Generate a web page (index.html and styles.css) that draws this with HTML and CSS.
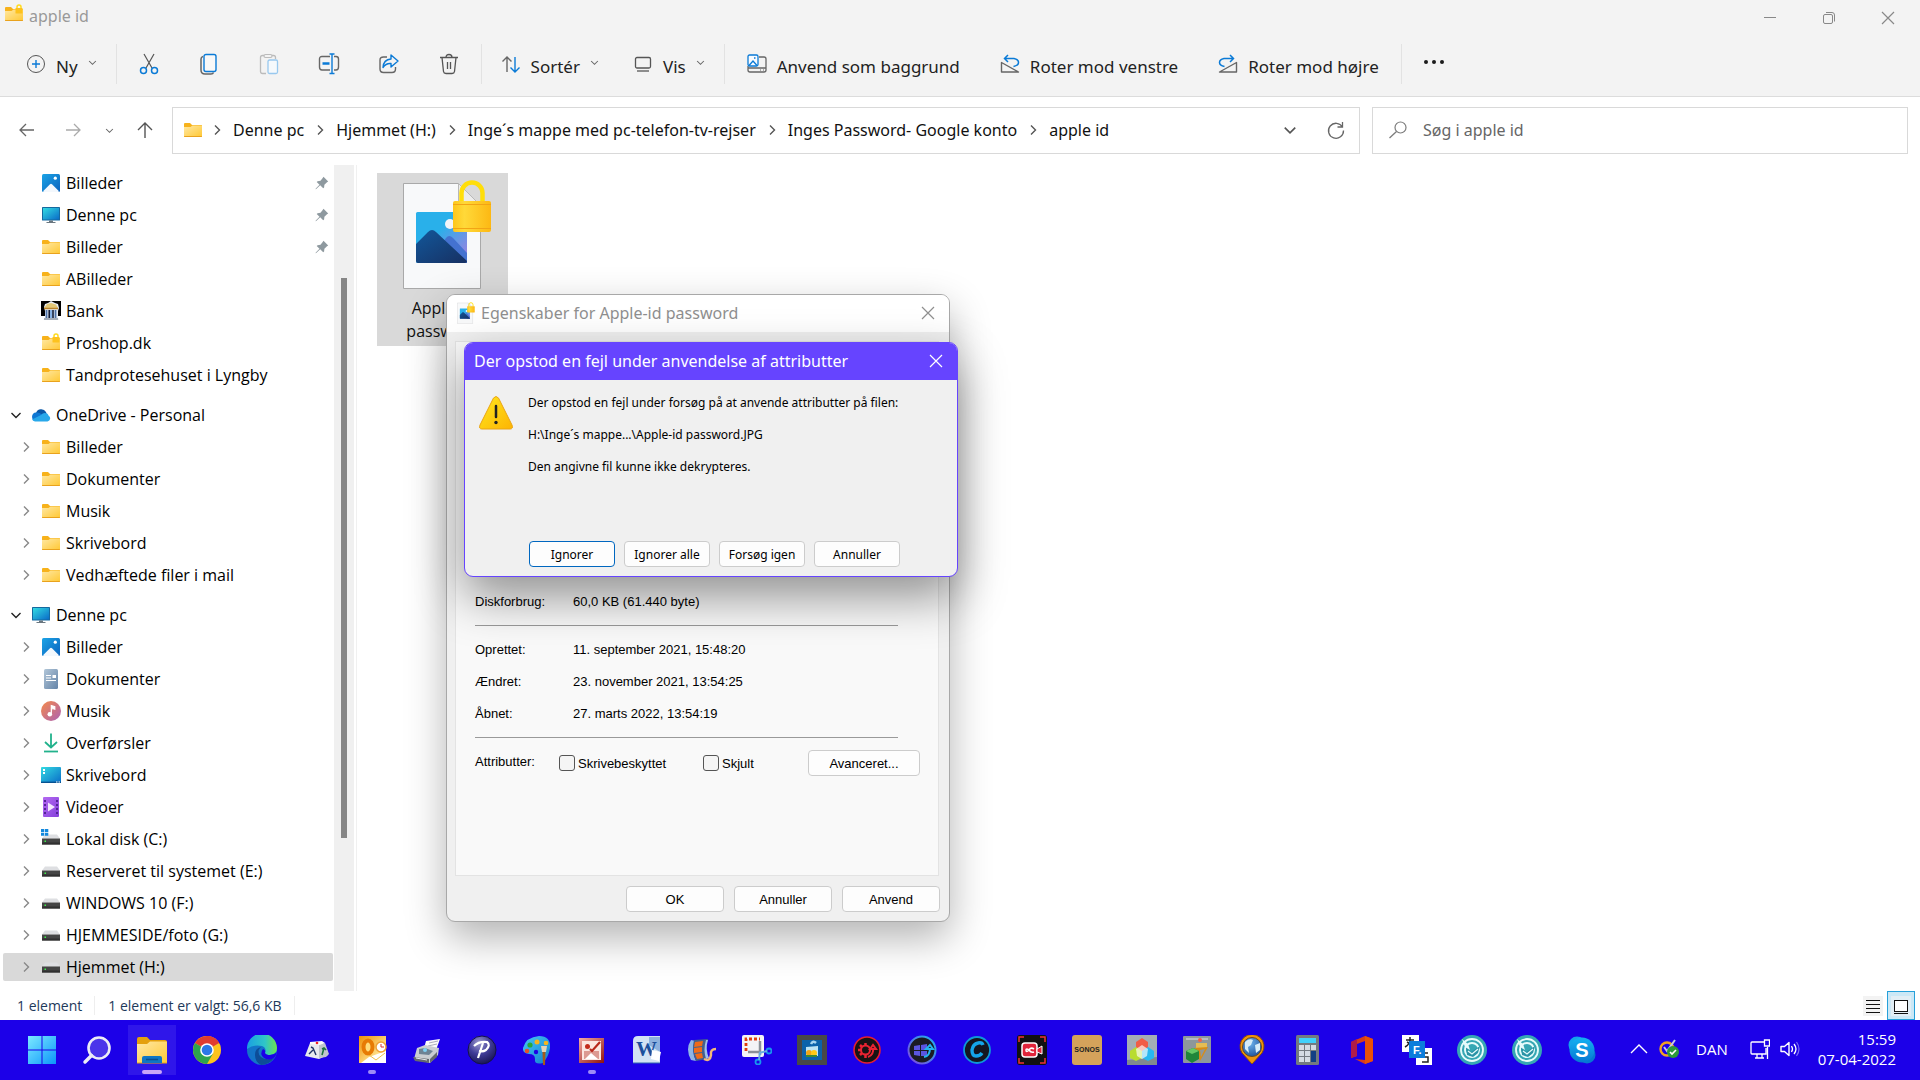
FILE: index.html
```html
<!DOCTYPE html>
<html lang="da">
<head>
    <meta charset="utf-8">
    <title>apple id</title>
    <link rel="stylesheet" href="styles.css">
</head>
<body>

<!-- Shared icons -->
<svg class="sprite" aria-hidden="true">
    <defs>
        <linearGradient id="g-folder" x1="0" y1="0" x2="1" y2="1"><stop offset="0" stop-color="#ffe8a4"/><stop offset="1" stop-color="#ffc937"/></linearGradient>
        <linearGradient id="g-screen" x1="0" y1="0" x2="1" y2="1"><stop offset="0" stop-color="#33dbe2"/><stop offset="1" stop-color="#0a6cc8"/></linearGradient>
        <linearGradient id="g-blue" x1="0" y1="0" x2="1" y2="1"><stop offset="0" stop-color="#1ca4e6"/><stop offset="1" stop-color="#0a62bd"/></linearGradient>
        <linearGradient id="g-doc" x1="0" y1="0" x2="1" y2="1"><stop offset="0" stop-color="#b2c6d8"/><stop offset="1" stop-color="#6484a8"/></linearGradient>
        <linearGradient id="g-music" x1="0" y1="0" x2="1" y2="1"><stop offset="0" stop-color="#f58a4a"/><stop offset="1" stop-color="#ac62b4"/></linearGradient>
        <linearGradient id="g-video" x1="0" y1="0" x2="1" y2="1"><stop offset="0" stop-color="#b469f2"/><stop offset="1" stop-color="#8440da"/></linearGradient>
        <linearGradient id="g-lock" x1="0" y1="0" x2="1" y2="0"><stop offset="0" stop-color="#fdc61c"/><stop offset=".3" stop-color="#ffd939"/><stop offset="1" stop-color="#fdb813"/></linearGradient>
        <linearGradient id="g-win" x1="0" y1="0" x2="1" y2="1"><stop offset="0" stop-color="#7ceaff"/><stop offset="1" stop-color="#0c95fb"/></linearGradient>
        <linearGradient id="g-sky" x1="0" y1="0" x2="1" y2="1"><stop offset=".4" stop-color="#29b0ea"/><stop offset="1" stop-color="#a87be0"/></linearGradient>
        <linearGradient id="g-mount" x1="0" y1="0" x2="1" y2="1"><stop offset="0" stop-color="#12579a"/><stop offset="1" stop-color="#173062"/></linearGradient>
        <linearGradient id="g-warn" x1="0" y1="0" x2="1" y2="1"><stop offset="0" stop-color="#ffe81e"/><stop offset="1" stop-color="#fdb403"/></linearGradient>
        <linearGradient id="g-edge" x1="0" y1="0" x2="1" y2="0"><stop offset="0" stop-color="#1a9fe2"/><stop offset=".6" stop-color="#2fc6c8"/><stop offset="1" stop-color="#6ee24e"/></linearGradient>
        <linearGradient id="g-ring" x1="0" y1="1" x2="1" y2="0"><stop offset="0" stop-color="#8344e0"/><stop offset="1" stop-color="#1bb4ee"/></linearGradient>
        <linearGradient id="g-red" x1="0" y1="0" x2="1" y2="1"><stop offset="0" stop-color="#f4aca4"/><stop offset="1" stop-color="#8e120c"/></linearGradient>
        <linearGradient id="g-gold" x1="0" y1="0" x2="1" y2="1"><stop offset="0" stop-color="#ee8e06"/><stop offset=".7" stop-color="#ffe28c"/><stop offset="1" stop-color="#fff3cf"/></linearGradient>
        <linearGradient id="g-paint" x1="0" y1="0" x2="1" y2="1"><stop offset="0" stop-color="#48c8f4"/><stop offset="1" stop-color="#107fd0"/></linearGradient>
        <linearGradient id="g-skype" x1="0" y1="0" x2="0" y2="1"><stop offset="0" stop-color="#14b2f2"/><stop offset="1" stop-color="#0677d2"/></linearGradient>
        <radialGradient id="g-ball" cx=".4" cy=".25" r=".8"><stop offset="0" stop-color="#9c9ad0"/><stop offset=".5" stop-color="#403c98"/><stop offset="1" stop-color="#16124e"/></radialGradient>
        <radialGradient id="g-globe" cx=".4" cy=".3" r=".8"><stop offset="0" stop-color="#6cb4ee"/><stop offset="1" stop-color="#1a4a94"/></radialGradient>
    </defs>
    <symbol id="i-folder" viewBox="0 0 20 20">
        <path d="M1 4q0-1 1-1h5l2 2h9.500q.5 0 .5.500V16q0 1-1 1H2q-1 0-1-1z" fill="#f7b21b"/>
        <path d="M1 7h6.500l2-1.500H19V15.500q0 .8-.8.8H1.800q-.8 0-.8-.8z" fill="url(#g-folder)"/>
        <path d="M1 16h18v.3q0 .7-1 .7H2q-1 0-1-.7z" fill="#e9a21d"/>
    </symbol>
    <symbol id="i-folderlock" viewBox="0 0 20 20">
        <use href="#i-folder"/>
        <path d="M13 4.500V3a2 2 0 0 1 4 0v1.500" fill="none" stroke="#ffdb1e" stroke-width="1.500"/>
        <rect x="11.500" y="4" width="7" height="5.500" rx=".6" fill="#fdc21d"/>
    </symbol>
    <symbol id="i-pictures" viewBox="0 0 20 20">
        <rect x="1" y="1" width="18" height="18" rx="1.500" fill="url(#g-blue)"/>
        <path d="M2 18.300l7-7q1-1 2 0l7 7q-.4.700-1 .7H3q-.6 0-1-.7z" fill="#f3f8fd"/>
        <circle cx="14.300" cy="5.200" r="1.600" fill="#fff"/>
    </symbol>
    <symbol id="i-pc" viewBox="0 0 20 20">
        <rect x="1" y="2" width="18" height="13.500" rx=".6" fill="#15699f"/>
        <rect x="2" y="3" width="16" height="11.500" fill="url(#g-screen)"/>
        <path d="M8 15.500h4V17h2.500v1h-9v-1H8z" fill="#6a7780"/>
    </symbol>
    <symbol id="i-bank" viewBox="0 0 20 20">
        <path d="M0 0h20v15H0z" fill="#000"/>
        <path d="M3 6l1-3 3-1 3-2 4 2 3 1 1 4-1 3v7l1 2H2l2-2v-7z" fill="#e8edf4"/>
        <path d="M3 7l3-4 4-1 5 1.500L17 7z" fill="#e2c777"/>
        <path d="M3 7.500h14" stroke="#b9822c" stroke-width="1.500"/>
        <path d="M5.500 9v8M14.500 9v8" stroke="#4d72a8" stroke-width="1.800"/><path d="M8.200 9v8M12 9v8" stroke="#101c38" stroke-width="1.600"/><path d="M10 9v8" stroke="#6fa3e0" stroke-width="1.600"/>
        <path d="M3 18h14" stroke="#8f99a6" stroke-width="1.500"/>
    </symbol>
    <symbol id="i-onedrive" viewBox="0 0 20 20">
        <path d="M5 8a5.500 5.500 0 0 1 10-1l1 3-9 5z" fill="#0a58a8"/>
        <path d="M4.500 16A4.300 4.300 0 0 1 5 7.500q3-.5 6 2L14 14z" fill="#0f78d4"/>
        <path d="M4 16.500q-2-.5-3-2l9-4.500q2.500-3 6-1.500 1 .5 1.500 2A3.200 3.200 0 0 1 16.500 16.500z" fill="#28a8ea"/>
    </symbol>
    <symbol id="i-doc" viewBox="0 0 20 20">
        <rect x="3" y="0" width="14" height="20" rx="1.500" fill="url(#g-doc)"/>
        <path d="M5 6.500h5M5 9h5M5 11.500h10" stroke="#fff" stroke-width="1.200"/><rect x="11.500" y="6" width="3.500" height="3" fill="#fff"/>
    </symbol>
    <symbol id="i-music" viewBox="0 0 20 20">
        <circle cx="10" cy="10" r="10" fill="url(#g-music)"/>
        <circle cx="8.800" cy="13.300" r="2.300" fill="#fff"/><path d="M10.300 13V4.500l3.500 1.200v2.500l-2.300-.8" fill="#fff" stroke="#fff" stroke-width="1.200"/>
    </symbol>
    <symbol id="i-download" viewBox="0 0 20 20">
        <path d="M10 .5V14M4 9l6 5.500L16 9" fill="none" stroke="#22b28c" stroke-width="1.800"/><path d="M3 18.500h14" stroke="#22b28c" stroke-width="1.800"/>
    </symbol>
    <symbol id="i-desktop" viewBox="0 0 20 20">
        <rect x="0" y="2" width="20" height="16" rx="1" fill="url(#g-screen)"/><path d="M0 17.300h20" stroke="#064e8e" stroke-width="1.300"/>
        <path d="M2 4h2v2H2zM2 7h2v2H2z" fill="#fff"/><path d="M15 17h1.500M17.500 17H19" stroke="#fff"/>
    </symbol>
    <symbol id="i-video" viewBox="0 0 20 20">
        <rect x="2" y="0" width="16" height="20" rx="1" fill="url(#g-video)"/><path d="M7 5.500l7 4.500-7 4.500z" fill="#f2e6fc"/>
        <path d="M4 3v14M16 3v14" stroke="#4d1f8e" stroke-width="1.800" stroke-dasharray="2 2"/>
    </symbol>
    <symbol id="i-drive" viewBox="0 0 20 20">
        <path d="M4 5.500h12l3 4H1z" fill="#dedfe2"/><rect x="1" y="9.500" width="18" height="6" fill="#454545"/><path d="M1 13.500h18v2H1z" fill="#303030"/><rect x="3.500" y="11.500" width="1.500" height="1.500" fill="#3df04a"/>
    </symbol>
    <symbol id="i-drivec" viewBox="0 0 20 20">
        <use href="#i-drive"/><path d="M0 0h3.300v3H0zM4 0h3.300v3H4zM0 3.800h3.300v3H0zM4 3.800h3.300v3H4z" fill="#1388dd"/>
    </symbol>
    <symbol id="i-pin" viewBox="0 0 14 14">
        <path d="M8.500.8L13.200 5.500l-1.200.8-2.600 2.400-.3 2.800-.9.800-3-3L1.200 13l-.7.300.3-.9L4.500 8.700l-2.800-2.600.9-.9 2.900-.4L7.700 2z" fill="#8e999f"/>
    </symbol>
    <symbol id="i-right" viewBox="0 0 12 12"><path d="M4 1.500L8.500 6 4 10.500" fill="none" stroke="currentColor" stroke-width="1.400"/></symbol>
    <symbol id="i-down" viewBox="0 0 12 12"><path d="M1.500 4L6 8.500 10.500 4" fill="none" stroke="currentColor" stroke-width="1.400"/></symbol>
    <symbol id="i-close" viewBox="0 0 14 14"><path d="M1 1l12 12M13 1L1 13" fill="none" stroke="currentColor" stroke-width="1.200"/></symbol>
    <symbol id="i-photo" viewBox="0 0 90 111">
        <path d="M1.500 4.500h55l22 22v83h-77z" fill="#f8f9fa" stroke="#a9a9a9"/>
        <path d="M56.500 4.500v22h22z" fill="#ececec" stroke="#b8b8b8"/>
        <rect x="14" y="33" width="51" height="51" rx="1.500" fill="url(#g-sky)"/>
        <circle cx="48" cy="45" r="5" fill="#f2f4f8"/>
        <path d="M40 65l4-6q3-4 7 0l14 15v10H50z" fill="#4472d0"/>
        <path d="M14 65l12-12q4-4 8 0l31 29q0 2-2 2H16q-2 0-2-2z" fill="url(#g-mount)"/>
        <path d="M59.500 23V14a10.500 10.500 0 0 1 21 0v9" fill="none" stroke="#ffde0a" stroke-width="4.500"/>
        <rect x="51" y="22" width="38" height="31" rx="2" fill="url(#g-lock)"/><path d="M51 25.500h38M51 49.500h38" stroke="#f2a415"/>
    </symbol>
    <symbol id="i-teal" viewBox="0 0 30 30">
        <circle cx="15" cy="15" r="15" fill="#36a7b4"/><circle cx="15" cy="15" r="11" fill="none" stroke="#e6fbfb" stroke-width="1.800"/>
        <circle cx="15" cy="15" r="7" fill="none" stroke="#e6fbfb" stroke-width="2"/>
        <path d="M9 12l5 5 9-6-2 7-5 4-6-2z" fill="#2a93a6"/><path d="M5 4l6 5 2 6-5-3z" fill="#e6fbfb"/>
        <path d="M11 16l4 3 6-5" fill="none" stroke="#e6fbfb" stroke-width="1.200"/>
    </symbol>
</svg>

<div class="window">
    <header class="window-top">
        <div class="titlebar">
            <svg class="icon"><use href="#i-folderlock"/></svg>
            <span class="window-name">apple id</span>
            <div class="window-buttons">
                <button type="button" aria-label="Minimer"><svg class="icon-s" viewBox="0 0 14 14"><path d="M1 6.500h12" stroke="currentColor"/></svg></button>
                <button type="button" aria-label="Gendan"><svg class="icon-s" viewBox="0 0 14 14"><rect x="1.500" y="3.500" width="9" height="9" rx="1.500" fill="none" stroke="currentColor"/><path d="M4 1.500h6q2.500 0 2.500 2.500v6.500" fill="none" stroke="currentColor"/></svg></button>
                <button type="button" aria-label="Luk"><svg class="icon-s"><use href="#i-close"/></svg></button>
            </div>
        </div>

        <div class="toolbar">
            <button type="button" class="tool tool-new">
                <svg class="icon" viewBox="0 0 20 20"><circle cx="10" cy="10" r="8.500" fill="none" stroke="#555"/><path d="M10 6v8M6 10h8" stroke="#0a7ad6" stroke-width="1.400"/></svg>
                <span>Ny</span><svg class="caret"><use href="#i-down"/></svg>
            </button>
            <span class="divider"></span>
            <button type="button" class="tool-icon" aria-label="Klip"><svg class="icon-l" viewBox="0 0 22 22"><path d="M6 1l8 14M16 1L8 15" fill="none" stroke="#555" stroke-width="1.200"/><circle cx="5.500" cy="17.500" r="3" fill="none" stroke="#0a7ad6" stroke-width="1.500"/><circle cx="16.500" cy="17.500" r="3" fill="none" stroke="#0a7ad6" stroke-width="1.500"/></svg></button>
            <button type="button" class="tool-icon" aria-label="Kopier"><svg class="icon-l" viewBox="0 0 22 22"><path d="M5 3.500q-2 .5-2 2.500v11q0 4 4 4h6q2 0 2.500-1.500" fill="none" stroke="#666" stroke-width="1.500"/><rect x="6" y="1.500" width="12" height="17" rx="2" fill="#f8f8f8" stroke="#0a7ad6" stroke-width="1.400"/></svg></button>
            <button type="button" class="tool-icon" aria-label="Sæt ind"><svg class="icon-l" viewBox="0 0 22 22"><path d="M8 20.500H4.500q-2 0-2-2v-14q0-2 2-2H6M14 2.500h1.500q2 0 2 2V6" fill="none" stroke="#bbb" stroke-width="1.300"/><rect x="6" y="1.500" width="8" height="3" rx="1.500" fill="none" stroke="#bbb" stroke-width="1.200"/><rect x="10" y="7" width="9.500" height="13.500" rx="1.500" fill="#f5f9fc" stroke="#98c8ee" stroke-width="1.300"/></svg></button>
            <button type="button" class="tool-icon" aria-label="Omdøb"><svg class="icon-l" viewBox="0 0 22 22"><path d="M12 3.500H4q-2.500 0-2.500 2.500v8q0 3 2.500 3h8M16 3.500h2q2.500 0 2.500 2.500v8q0 3-2.500 3h-2" fill="none" stroke="#666" stroke-width="1.400"/><path d="M14 1v19.500M11.500 1h5M11.500 20.500h5" stroke="#0a7ad6" stroke-width="1.400"/><path d="M4.500 10.500h7" stroke="#0a7ad6" stroke-width="2.500"/></svg></button>
            <button type="button" class="tool-icon" aria-label="Del"><svg class="icon-l" viewBox="0 0 22 22"><path d="M9 4H5.500Q2 4 2 7v9q0 3.500 3.500 3.500h8.500q3.500 0 3.500-3.500v-2" fill="none" stroke="#666" stroke-width="1.400"/><path d="M13 2l7 6-7 6v-3.500q-5-.5-8 4 .5-8 8-8.500z" fill="none" stroke="#0a7ad6" stroke-width="1.400" stroke-linejoin="round"/></svg></button>
            <button type="button" class="tool-icon" aria-label="Slet"><svg class="icon-l" viewBox="0 0 22 22"><path d="M2 4.500h18M4 4.500l1.500 14q.3 2 2.500 2h6q2.200 0 2.500-2L18 4.500M8 4.500q0-3 3-3t3 3M9.500 9v7M12.500 9v7" fill="none" stroke="#555" stroke-width="1.300"/></svg></button>
            <span class="divider"></span>
            <button type="button" class="tool">
                <svg class="icon" viewBox="0 0 20 20"><path d="M6 18V3M1.500 7.500L6 3l4.500 4.500" fill="none" stroke="#666" stroke-width="1.400"/><path d="M14 3v15M9.500 13.500L14 18l4.500-4.500" fill="none" stroke="#0a7ad6" stroke-width="1.400"/></svg>
                <span>Sortér</span><svg class="caret"><use href="#i-down"/></svg>
            </button>
            <button type="button" class="tool">
                <svg class="icon" viewBox="0 0 20 20"><rect x="2.500" y="3.500" width="15" height="10.500" rx="1.500" fill="none" stroke="#555" stroke-width="1.300"/><path d="M4 17h12" stroke="#555" stroke-width="1.300"/></svg>
                <span>Vis</span><svg class="caret"><use href="#i-down"/></svg>
            </button>
            <span class="divider"></span>
            <button type="button" class="tool wide">
                <svg class="icon" viewBox="0 0 20 20"><path d="M12 3h5q2 0 2 2v9M1 12v4q0 2 2 2h14q2 0 2-2v-2H1" fill="none" stroke="#666" stroke-width="1.300"/><path d="M13 16h1M16 16h1" stroke="#666"/><rect x="1" y="1" width="10" height="11" rx="1.500" fill="#f8fbff" stroke="#0a7ad6" stroke-width="1.300"/><path d="M2 11.500l4-4.500 4 4.500M7 4h1.500" fill="none" stroke="#0a7ad6" stroke-width="1.300"/></svg>
                <span>Anvend som baggrund</span>
            </button>
            <button type="button" class="tool wide">
                <svg class="icon" viewBox="0 0 20 20"><path d="M1.500 8.500v9.500h17z" fill="none" stroke="#666" stroke-width="1.400" stroke-linejoin="round"/><path d="M8 1L4.500 4.500 8 8M5 4.500h9q4.500 1 4.500 4t-5 4" fill="none" stroke="#0a7ad6" stroke-width="1.500"/></svg>
                <span>Roter mod venstre</span>
            </button>
            <button type="button" class="tool wide">
                <svg class="icon" viewBox="0 0 20 20"><path d="M18.500 8.500v9.500h-17z" fill="none" stroke="#666" stroke-width="1.400" stroke-linejoin="round"/><path d="M12 1l3.500 3.500L12 8M15 4.500H6q-4.500 1-4.500 4t5 4" fill="none" stroke="#0a7ad6" stroke-width="1.500"/></svg>
                <span>Roter mod højre</span>
            </button>
            <span class="divider"></span>
            <button type="button" class="tool wide" aria-label="Mere"><svg class="icon" viewBox="0 0 20 20"><circle cx="2" cy="8" r="2" fill="#1b1b1b"/><circle cx="10" cy="8" r="2" fill="#1b1b1b"/><circle cx="18" cy="8" r="2" fill="#1b1b1b"/></svg></button>
        </div>
    </header>

    <!-- Address bar and search -->
    <div class="navrow">
        <button type="button" aria-label="Tilbage"><svg class="icon" viewBox="0 0 20 20"><path d="M17 10H3M9 4l-6 6 6 6" fill="none" stroke="#666" stroke-width="1.300"/></svg></button>
        <button type="button" aria-label="Frem"><svg class="icon" viewBox="0 0 20 20"><path d="M3 10h14M11 4l6 6-6 6" fill="none" stroke="#aaa" stroke-width="1.300"/></svg></button>
        <button type="button" class="narrow" aria-label="Seneste"><svg class="caret"><use href="#i-down"/></svg></button>
        <button type="button" aria-label="Op"><svg class="icon" viewBox="0 0 20 20"><path d="M10 18V3M3 10l7-7 7 7" fill="none" stroke="#555" stroke-width="1.400"/></svg></button>
        <nav class="address">
            <svg class="icon"><use href="#i-folder"/></svg>
            <svg class="crumb-sep"><use href="#i-right"/></svg><a href="#">Denne pc</a>
            <svg class="crumb-sep"><use href="#i-right"/></svg><a href="#">Hjemmet (H:)</a>
            <svg class="crumb-sep"><use href="#i-right"/></svg><a href="#">Inge´s mappe med pc-telefon-tv-rejser</a>
            <svg class="crumb-sep"><use href="#i-right"/></svg><a href="#">Inges Password- Google konto</a>
            <svg class="crumb-sep"><use href="#i-right"/></svg><a href="#">apple id</a>
            <button type="button" class="push" aria-label="Vis adresser"><svg class="icon-s"><use href="#i-down"/></svg></button>
            <button type="button" aria-label="Opdater"><svg class="icon" viewBox="0 0 20 20"><path d="M16.500 7A7.500 7.500 0 1 0 17.500 10.500M16.500 2v5h-5" fill="none" stroke="#666" stroke-width="1.300"/></svg></button>
        </nav>
        <label class="search">
            <svg class="icon" viewBox="0 0 20 20"><circle cx="12.500" cy="7.500" r="5.500" fill="none" stroke="#7c7c7c" stroke-width="1.200"/><path d="M8.500 11.500L1.500 18" stroke="#7c7c7c" stroke-width="1.300"/></svg>
            <input type="text" placeholder="Søg i apple id" aria-label="Søg i apple id">
        </label>
    </div>

    <div class="content">
        <nav class="sidebar">
            <div class="tree">
                <a href="#" class="row quick"><svg class="icon"><use href="#i-pictures"/></svg>Billeder<svg class="pin"><use href="#i-pin"/></svg></a>
                <a href="#" class="row quick"><svg class="icon"><use href="#i-pc"/></svg>Denne pc<svg class="pin"><use href="#i-pin"/></svg></a>
                <a href="#" class="row quick"><svg class="icon"><use href="#i-folder"/></svg>Billeder<svg class="pin"><use href="#i-pin"/></svg></a>
                <a href="#" class="row quick"><svg class="icon"><use href="#i-folder"/></svg>ABilleder</a>
                <a href="#" class="row quick"><svg class="icon"><use href="#i-bank"/></svg>Bank</a>
                <a href="#" class="row quick"><svg class="icon"><use href="#i-folderlock"/></svg>Proshop.dk</a>
                <a href="#" class="row quick"><svg class="icon"><use href="#i-folder"/></svg>Tandprotesehuset i Lyngby</a>

                <a href="#" class="row root"><svg class="arrow"><use href="#i-down"/></svg><svg class="icon"><use href="#i-onedrive"/></svg>OneDrive - Personal</a>
                <a href="#" class="row"><svg class="arrow"><use href="#i-right"/></svg><svg class="icon"><use href="#i-folder"/></svg>Billeder</a>
                <a href="#" class="row"><svg class="arrow"><use href="#i-right"/></svg><svg class="icon"><use href="#i-folder"/></svg>Dokumenter</a>
                <a href="#" class="row"><svg class="arrow"><use href="#i-right"/></svg><svg class="icon"><use href="#i-folder"/></svg>Musik</a>
                <a href="#" class="row"><svg class="arrow"><use href="#i-right"/></svg><svg class="icon"><use href="#i-folder"/></svg>Skrivebord</a>
                <a href="#" class="row"><svg class="arrow"><use href="#i-right"/></svg><svg class="icon"><use href="#i-folder"/></svg>Vedhæftede filer i mail</a>

                <a href="#" class="row root"><svg class="arrow"><use href="#i-down"/></svg><svg class="icon"><use href="#i-pc"/></svg>Denne pc</a>
                <a href="#" class="row"><svg class="arrow"><use href="#i-right"/></svg><svg class="icon"><use href="#i-pictures"/></svg>Billeder</a>
                <a href="#" class="row"><svg class="arrow"><use href="#i-right"/></svg><svg class="icon"><use href="#i-doc"/></svg>Dokumenter</a>
                <a href="#" class="row"><svg class="arrow"><use href="#i-right"/></svg><svg class="icon"><use href="#i-music"/></svg>Musik</a>
                <a href="#" class="row"><svg class="arrow"><use href="#i-right"/></svg><svg class="icon"><use href="#i-download"/></svg>Overførsler</a>
                <a href="#" class="row"><svg class="arrow"><use href="#i-right"/></svg><svg class="icon"><use href="#i-desktop"/></svg>Skrivebord</a>
                <a href="#" class="row"><svg class="arrow"><use href="#i-right"/></svg><svg class="icon"><use href="#i-video"/></svg>Videoer</a>
                <a href="#" class="row"><svg class="arrow"><use href="#i-right"/></svg><svg class="icon"><use href="#i-drivec"/></svg>Lokal disk (C:)</a>
                <a href="#" class="row"><svg class="arrow"><use href="#i-right"/></svg><svg class="icon"><use href="#i-drive"/></svg>Reserveret til systemet (E:)</a>
                <a href="#" class="row"><svg class="arrow"><use href="#i-right"/></svg><svg class="icon"><use href="#i-drive"/></svg>WINDOWS 10 (F:)</a>
                <a href="#" class="row"><svg class="arrow"><use href="#i-right"/></svg><svg class="icon"><use href="#i-drive"/></svg>HJEMMESIDE/foto (G:)</a>
                <a href="#" class="row selected"><svg class="arrow"><use href="#i-right"/></svg><svg class="icon"><use href="#i-drive"/></svg>Hjemmet (H:)</a>
            </div>
            <div class="scrollbar"><div class="thumb"></div></div>
        </nav>
        <main class="files">
            <a href="#" class="file">
                <svg class="file-icon"><use href="#i-photo"/></svg>
                <span>Apple-id password</span>
            </a>
        </main>
    </div>

    <footer class="status">
        <span>1 element</span>
        <span>1 element er valgt: 56,6 KB</span>
        <div class="views">
            <button type="button" aria-label="Detaljer"><svg class="icon" viewBox="0 0 20 20"><rect width="20" height="20" fill="#f3f3f3"/><path d="M3 4.500h14M3 8.500h14M3 12.500h14M3 16.500h14" stroke="#111"/></svg></button>
            <button type="button" class="active" aria-label="Store ikoner"><svg class="icon" viewBox="0 0 20 20"><rect width="20" height="20" fill="#e2eef5"/><rect x="3.500" y="4.500" width="13" height="11" fill="#fff" stroke="#111"/><path d="M3 17.500h14" stroke="#111"/></svg></button>
        </div>
    </footer>
</div>

<!-- Properties dialog -->
<section class="dialog props" role="dialog" aria-label="Egenskaber">
    <div class="dialog-title">
        <svg class="title-photo"><use href="#i-photo"/></svg>
        <span>Egenskaber for Apple-id password</span>
        <button type="button" aria-label="Luk"><svg class="icon-s"><use href="#i-close"/></svg></button>
    </div>
    <form class="sheet">
        <dl class="facts">
            <dt>Diskforbrug:</dt><dd>60,0 KB (61.440 byte)</dd>
        </dl>
        <hr>
        <dl class="facts">
            <dt>Oprettet:</dt><dd>11. september 2021, 15:48:20</dd>
            <dt>Ændret:</dt><dd>23. november 2021, 13:54:25</dd>
            <dt>Åbnet:</dt><dd>27. marts 2022, 13:54:19</dd>
        </dl>
        <hr>
        <div class="attributes">
            <span>Attributter:</span>
            <label class="first"><input type="checkbox">Skrivebeskyttet</label>
            <label><input type="checkbox">Skjult</label>
            <button type="button" class="btn">Avanceret...</button>
        </div>
    </form>
    <div class="dialog-buttons">
        <button type="button" class="btn">OK</button>
        <button type="button" class="btn">Annuller</button>
        <button type="button" class="btn">Anvend</button>
    </div>
</section>

<!-- Error message -->
<section class="dialog error" role="alertdialog" aria-label="Fejl">
    <div class="dialog-title">
        <span>Der opstod en fejl under anvendelse af attributter</span>
        <button type="button" aria-label="Luk"><svg class="icon-s"><use href="#i-close"/></svg></button>
    </div>
    <div class="message">
        <svg class="warning" viewBox="0 0 34 34"><path d="M14.500 2q2.500-3 5 0L33 29q1.500 4-2 4H3q-3.500 0-2-4z" fill="url(#g-warn)" stroke="#eaa414"/><path d="M17 10v11" stroke="#222" stroke-width="2.500" stroke-linecap="round"/><circle cx="17" cy="26.500" r="1.700" fill="#222"/></svg>
        <div>
            <p>Der opstod en fejl under forsøg på at anvende attributter på filen:</p>
            <p>H:\Inge´s mappe...\Apple-id password.JPG</p>
            <p>Den angivne fil kunne ikke dekrypteres.</p>
        </div>
    </div>
    <div class="dialog-buttons">
        <button type="button" class="btn default">Ignorer</button>
        <button type="button" class="btn">Ignorer alle</button>
        <button type="button" class="btn">Forsøg igen</button>
        <button type="button" class="btn">Annuller</button>
    </div>
</section>

<footer class="taskbar">
    <div class="apps">
        <button type="button" aria-label="Start"><svg viewBox="0 0 30 30"><path d="M1 1h13.500v13.500H1zM15.500 1H29v13.500H15.500zM1 15.500h13.500V29H1zM15.500 15.500H29V29H15.500z" fill="url(#g-win)"/></svg></button>
        <button type="button" aria-label="Søg"><svg viewBox="0 0 30 30"><circle cx="17" cy="13" r="10.500" fill="#4b35ea" stroke="#ececf6" stroke-width="2.600"/><path d="M9.500 20.500L3 27" stroke="#ececf6" stroke-width="3.500" stroke-linecap="round"/></svg></button>
        <button type="button" class="open current" aria-label="Stifinder"><svg viewBox="0 0 30 30"><path d="M0 4q0-2 2-2h8l3 3h15q2 0 2 2v5H0z" fill="#e4a00e"/><path d="M0 9h10l3-2.500h17V28H0z" fill="url(#g-folder)"/><path d="M0 28h30" stroke="#e5a418"/><path d="M5 28v-5q0-2 2-2h16q2 0 2 2v5z" fill="#0f76c4"/><path d="M9 24.500h12" stroke="#0a4f8e" stroke-width="1.500"/></svg></button>
        <button type="button" aria-label="Chrome"><svg viewBox="0 0 30 30"><circle cx="15" cy="15" r="14" fill="#fcc31e"/><path d="M15 15L2.900 8A14 14 0 0 1 27.100 8z" fill="#e03c31"/><path d="M15 1a14 14 0 0 1 12.100 7H15z" fill="#e03c31"/><path d="M2.900 8A14 14 0 0 0 15 29l6-10.500L15 15z" fill="#2da44e"/><circle cx="15" cy="15" r="6.800" fill="#fff"/><circle cx="15" cy="15" r="5.300" fill="#2b78e8"/></svg></button>
        <button type="button" aria-label="Edge"><svg viewBox="0 0 30 30"><circle cx="15" cy="15" r="15" fill="#1374c8"/><path d="M0 14A15 15 0 0 1 30 13q0 6-7 7-4 0-5-2 2-5-3-7-8-2-15 3z" fill="url(#g-edge)"/><path d="M8 20q0-7 6-8-5 5 0 10 5 4 13 1Q22 30 14 30 8 27 8 20z" fill="#0d4d98"/><path d="M16 14q3 1 2 4 1 2 5 2 4 0 7-3-1 4-3 6-5 3-10 0-5-4-1-9z" fill="#1c00e8"/></svg></button>
        <button type="button" aria-label="Terninger"><svg viewBox="0 0 30 30"><path d="M8 8h13l2 2 3 10-9 4-14-3z" fill="#e8eaee"/><path d="M17 10l6-2 4 11-3 3-7 1z" fill="#bfc4cc"/><path d="M8 7l12-1 3 2-6 2-9-1z" fill="#fafafa"/><circle cx="15" cy="8" r="1.300" fill="#e22"/><path d="M9 12l2 1 3 7M11 15l-4 4" stroke="#203468" stroke-width="1.400" fill="none"/><path d="M20 20l2-7M20 14l2-1 2 2" stroke="#1c7240" stroke-width="1.600" fill="none"/></svg></button>
        <button type="button" class="open" aria-label="Outlook"><svg viewBox="0 0 30 30"><path d="M2 1h27v27H2z" fill="url(#g-gold)"/><path d="M12 22l17-6v12H4z" fill="#fff"/><path d="M12 20l7 5 9-7" fill="none" stroke="#f1c04a"/><ellipse cx="11" cy="12" rx="4.500" ry="6.500" fill="#ffdc7a" stroke="#e77b04" stroke-width="4"/><circle cx="24" cy="12" r="5" fill="#fff" stroke="#eda136" stroke-width="1.500"/><path d="M24 9v3h3" fill="none" stroke="#d33"/></svg></button>
        <button type="button" aria-label="Printer"><svg viewBox="0 0 30 30"><path d="M14 6l14-2-4 11-13 2z" fill="#fafafa"/><path d="M17 8l9-2M16 11l9-2" stroke="#aab"/><path d="M5 13l8-3 14 3-1 7-8 8-16-4z" fill="#c9cdd2"/><path d="M7 14l6-1 8 3-4 4-10-1z" fill="#6d8294"/><circle cx="13" cy="15" r="2" fill="#7fd0f4"/><path d="M1 22l16 2v4L3 26zM18 24l7-7v5l-7 6z" fill="#65696f"/><path d="M4 23l11 2" stroke="#e8eaec"/></svg></button>
        <button type="button" aria-label="P"><svg viewBox="0 0 30 30"><circle cx="15" cy="15" r="14" fill="url(#g-ball)" stroke="#14114c"/><path d="M7 11q5-5 13-4 4 3-1 8-3 2-7 1M16 8l-5 15" fill="none" stroke="#fff" stroke-width="2.200"/></svg></button>
        <button type="button" aria-label="Paint"><svg viewBox="0 0 30 30"><path d="M17 1q12 0 11 12-1 8-7 15-9 2-8-4 0-5-6-5-7-1-6-6Q4 2 17 1z" fill="url(#g-paint)"/><circle cx="15" cy="7" r="2.500" fill="#f6b51e"/><circle cx="8" cy="10" r="2.600" fill="#28a83c"/><circle cx="5" cy="16" r="2.300" fill="#e4502c"/><circle cx="24" cy="8" r="2.300" fill="#f6b51e"/><circle cx="14" cy="17" r="2.200" fill="#1c00e8"/><path d="M19 11h6l-1 6h-4z" fill="#e5d5b8"/><path d="M20.500 17h3l-.5 13h-2z" fill="#a55a1a"/></svg></button>
        <button type="button" class="open" aria-label="Picture Manager"><svg viewBox="0 0 30 30"><rect x="2" y="3" width="25" height="25" fill="url(#g-red)"/><rect x="5" y="6" width="19" height="19" fill="#fbe6e1"/><path d="M7 16h15v8H7z" fill="#dc9a92"/><path d="M8 24l6-6 7 6z" fill="#fff"/><path d="M13 14l2 2 8-9" stroke="#b8281c" stroke-width="2.200" fill="none"/><circle cx="10.500" cy="11.500" r="2.500" fill="#c22c1e"/></svg></button>
        <button type="button" aria-label="Word"><svg viewBox="0 0 30 30"><path d="M1 6q0-5 5-5h22v27H1z" fill="#d2e2f4"/><path d="M17 2h11v15L17 10z" fill="#8db0de"/><text x="4" y="21" class="word">W</text><path d="M20 15l9 2-2 9-8-2z" fill="#fff"/><path d="M1 28h27" stroke="#2f66ae"/></svg></button>
        <button type="button" aria-label="Movie Maker"><svg viewBox="0 0 30 30"><path d="M4 5q-6 9 0 20l5 1q-5-10 0-20z" fill="#8fb5e6"/><path d="M7 5l14-1q-4 9-1 20l-11 2q-5-10-2-21z" fill="#42608e"/><path d="M8 7l8-1-1 5-8 1zM7 13l8-1v5l-8 1zM8 19l7-1 1 5-6 1z" fill="#f06a18"/><path d="M19 5q-3 10 0 19l3-1q-4-9-1-18z" fill="#9fc0ec"/><path d="M17 24q6 3 7-4-1-6 5-6" fill="none" stroke="#f2b878" stroke-width="2.500"/></svg></button>
        <button type="button" aria-label="Klippeværktøj"><svg viewBox="0 0 30 30"><rect width="22" height="22" rx="2" fill="#f4f4f6"/><path d="M4 16V4h14" fill="none" stroke="#df3c10" stroke-width="2.800" stroke-dasharray="3 2"/><path d="M6 17h12M18 6v14" stroke="#8b9198" stroke-width="2.500"/><circle cx="27" cy="16" r="2.500" fill="none" stroke="#1696ee" stroke-width="1.800"/><circle cx="16" cy="27" r="2.500" fill="none" stroke="#1696ee" stroke-width="1.800"/><path d="M17 18l8-2M18 17l-1 8" stroke="#67aee0" stroke-width="2"/></svg></button>
        <button type="button" aria-label="Fotos"><svg viewBox="0 0 30 30"><path d="M0 0h30v30H0z" fill="#484848"/><path d="M5 5h20v20H5z" fill="#0b62aa"/><path d="M9 12l12-1v10H9z" fill="#bde4f4"/><circle cx="12" cy="18" r="3" fill="#f0a514"/><circle cx="17" cy="18" r="3" fill="#ffc914"/><path d="M9 20h11v2H9z" fill="#3e8a30"/><path d="M14 9q2-4 5-1" stroke="#a5d4ef" stroke-width="2.500" fill="none"/></svg></button>
        <button type="button" aria-label="Game Booster"><svg viewBox="0 0 30 30"><circle cx="15" cy="15" r="13" fill="#171313" stroke="#e61f31" stroke-width="1.600"/><circle cx="13.500" cy="15" r="4.500" fill="none" stroke="#ea2432" stroke-width="2"/><path d="M13.500 8v3M13.500 19v4M6 15h3M8 10l2 2M8 20l2-2" stroke="#ea2432" stroke-width="2.500"/><path d="M16 22q6-2 5-9M18 14l3-4 3 4z" stroke="#ea2432" stroke-width="2" fill="none"/></svg></button>
        <button type="button" aria-label="Software Updater"><svg viewBox="0 0 30 30"><circle cx="15" cy="15" r="13.500" fill="#1a1b24" stroke="url(#g-ring)" stroke-width="2"/><path d="M7 11l6-1v5H7zM14 10l6-1v6h-6zM7 16h6v5l-6-1zM14 16h6v5l-6 0z" fill="#5a55e0"/><path d="M17 22q6-1 6-9M19 14l4-4 3 4z" fill="none" stroke="#22b5ee" stroke-width="2"/></svg></button>
        <button type="button" aria-label="CCleaner"><svg viewBox="0 0 30 30"><circle cx="15" cy="15" r="13" fill="#141620" stroke="#0e98d8" stroke-width="1.800"/><path d="M21 10q-1-3-5-2-5 1-6 7 0 6 4 6 4 0 6-3" fill="none" stroke="#14a5ea" stroke-width="3.400"/></svg></button>
        <button type="button" aria-label="Skærmoptager"><svg viewBox="0 0 30 30"><rect width="30" height="30" rx="3" fill="#111"/><path d="M2 7V2h5M23 2h5v5M28 23v5h-5M7 28H2v-5" fill="none" stroke="#e33" stroke-width="1.500"/><rect x="5" y="8" width="15" height="14" rx="3" fill="#e0243a" stroke="#fff" stroke-width="1.500"/><path d="M20 14l5-3v8l-5-2z" fill="#e0243a" stroke="#fff"/><path d="M17 17q-3 1-5-2-3-2-3 0 0 3 3 0 2-3 5-1" fill="none" stroke="#fff" stroke-width="1.600"/></svg></button>
        <button type="button" aria-label="Sonos"><svg viewBox="0 0 30 30"><rect width="30" height="30" rx="3" fill="#d5a25b"/><text x="15" y="17" class="sonos">SONOS</text></svg></button>
        <button type="button" aria-label="Farver"><svg viewBox="0 0 30 30"><path d="M0 0h30v30H0z" fill="#a4adb5"/><path d="M0 25l30-3v8H0z" fill="#80898f"/><path d="M15 3l6 4v7l-6 4-6-4V7z" fill="#f15c46"/><path d="M9 12l6 4v7l-6 3-6-3v-7z" fill="#b8dc30"/><path d="M21 12l6 4v7l-6 3-6-3v-7z" fill="#28b8f0"/><path d="M15 10l6 4-1 7-5 3-5-3-1-7z" fill="#fff" opacity=".65"/></svg></button>
        <button type="button" aria-label="Kasser"><svg viewBox="0 0 30 30"><rect x="1" y="1" width="28" height="27" rx="1" fill="#8e979c"/><path d="M4 4h22" stroke="#dde"/><circle cx="18" cy="5" r="2" fill="#f1604c"/><path d="M14 8h11v6H14z" fill="#e5bd54"/><path d="M12 13l14-1-8 14z" fill="#d68c18"/><path d="M18 15l5-1-4 8z" fill="#8e979c"/><path d="M4 16l7-3 6 3v8l-7 4-6-4z" fill="#21863a"/><path d="M4 16l7-3 6 3-7 3z" fill="#66c865"/></svg></button>
        <button type="button" aria-label="Kort"><svg viewBox="0 0 30 30"><path d="M15 29L5 18A12 12 0 1 1 25 18z" fill="#ef940d" stroke="#85500c"/><circle cx="15" cy="12" r="9.500" fill="url(#g-globe)" stroke="#6b4a20"/><path d="M8 7q4-4 8-2l-2 5-3 2 1 6-4-4zM18 10l5-2v7l-4 3z" fill="#d6edf9"/></svg></button>
        <button type="button" aria-label="Lommeregner"><svg viewBox="0 0 30 30"><rect x="4" width="23" height="30" rx="1.500" fill="#737a80"/><path d="M7 3h17v5H7z" fill="#3fd0fa"/><path d="M7 10h5v5H7zM13 10h5v5h-5zM19 10h5v5h-5zM7 16h5v5H7zM13 16h5v5h-5zM7 22h5v5H7zM13 22h5v5h-5z" fill="#d4dbe2"/><path d="M19 16h5v11h-5z" fill="#123f84"/></svg></button>
        <button type="button" aria-label="Office"><svg viewBox="0 0 30 30"><path d="M4 7L18 1l8 3v22l-8 3-10-5 10 1V6l-8 3v12l-6 2z" fill="#d83b1c"/><path d="M18 1l8 3v22l-8 3z" fill="#e85008"/><path d="M4 7l6-3v17l-6 2z" fill="#b01c48"/></svg></button>
        <button type="button" aria-label="Oversætter"><svg viewBox="0 0 30 30"><path d="M0 0h17v17H0zM14 13h16v17H14z" fill="#fff"/><path d="M4 5h8M8 2v3q0 4-5 7M5 7l7 4M19 18h7M19 22h7v5h-6" fill="none" stroke="#222" stroke-width="1.500"/><path d="M7 6h16v17H7z" fill="#0b7ddb"/><text x="11" y="19" class="letter">F.</text></svg></button>
        <button type="button" aria-label="Internet"><svg><use href="#i-teal"/></svg></button>
        <button type="button" aria-label="Internet 2"><svg><use href="#i-teal"/></svg></button>
        <button type="button" aria-label="Skype"><svg viewBox="0 0 30 30"><circle cx="10" cy="10" r="8.500" fill="#12a4ea"/><circle cx="20" cy="20" r="8.500" fill="#0677d2"/><circle cx="15" cy="15" r="12.500" fill="url(#g-skype)"/><text x="15" y="22" class="skype">S</text></svg></button>
    </div>
    <div class="tray">
        <button type="button" aria-label="Skjulte ikoner"><svg class="icon" viewBox="0 0 20 20"><path d="M2 14l8-8 8 8" fill="none" stroke="#fff" stroke-width="1.400"/></svg></button>
        <svg class="icon" viewBox="0 0 20 20"><circle cx="8" cy="10" r="6.500" fill="none" stroke="#f0a024" stroke-width="2.400"/><path d="M5 8l3 4 8-11" fill="none" stroke="#c4c8e4" stroke-width="2"/><circle cx="14" cy="13" r="6" fill="#2b9a3a"/><path d="M11 13l2 2 4-4" fill="none" stroke="#fff" stroke-width="1.600"/></svg>
        <span class="lang">DAN</span>
        <svg class="icon" viewBox="0 0 20 20"><path d="M14 3H2q-1 0-1 1v10q0 1 1 1h14V9M5 19h9M7 15v4M12 15v4M17.500 8v12M14.500 1h5v6h-5z" fill="none" stroke="#fff" stroke-width="1.300"/></svg>
        <svg class="icon" viewBox="0 0 20 20"><path d="M1 7.500h3.500L9 3.500v13l-4.500-4H1z" fill="none" stroke="#fff" stroke-width="1.400" stroke-linejoin="round"/><path d="M11.500 7q2 3 0 6M14 5q4 5 0 10" fill="none" stroke="#fff" stroke-width="1.300"/><path d="M16.500 3q5 7 0 14" fill="none" stroke="#7a6cf4" stroke-width="1.200"/></svg>
        <div class="clock">15:59<br>07-04-2022</div>
    </div>
</footer>

</body>
</html>
```
FILE: styles.css
```css
* {
    box-sizing: border-box;
}

body {
    margin: 0;
    height: 100vh;
    display: flex;
    flex-direction: column;
    overflow: hidden;
    background-color: #fff;
    color: #111;
    font-family: "Open Sans", "Noto Sans", sans-serif;
    font-size: 16px;
}

button {
    display: flex;
    align-items: center;
    justify-content: center;
    border: none;
    padding: 0;
    background: none;
    color: inherit;
    font: inherit;
}

a {
    color: inherit;
    text-decoration: none;
}

svg {
    flex: none;
}

.sprite {
    position: absolute;
    width: 0;
    height: 0;
}

.icon {
    width: 20px;
    height: 20px;
}

.icon-l {
    width: 22px;
    height: 22px;
}

.icon-s {
    width: 14px;
    height: 14px;
}

.caret {
    width: 9px;
    height: 9px;
    color: #666;
}

.window {
    flex: 1;
    min-height: 0;
    display: flex;
    flex-direction: column;
}

/* Title bar and toolbar */
.window-top {
    background-color: #f3f3f3;
    border-bottom: 1px solid #dcdcdc;
    font-family: "Noto Sans", sans-serif;
}

.titlebar {
    display: flex;
    align-items: center;
    gap: 5px;
    height: 32px;
    padding: 0 3px 0 4px;
    color: #999;
}

.titlebar > .icon {
    margin-bottom: 4px;
}

.window-buttons {
    display: flex;
    margin-left: auto;
    height: 32px;
}

.window-buttons button {
    width: 59px;
    padding-top: 4px;
    color: #888;
}

.toolbar {
    display: flex;
    align-items: center;
    height: 64px;
    color: #222;
    font-size: 17px;
}

.divider {
    width: 1px;
    height: 40px;
    margin: 0 2px;
    background-color: #e2e2e2;
}

.tool {
    gap: 10px;
    height: 40px;
    padding: 0 17px;
}

.tool span {
    padding-top: 4px;
}

.tool-new {
    padding: 0 17px 0 26px;
}

.wide {
    padding: 0 20px;
}

.tool .caret {
    margin-bottom: 4px;
}

.tool-icon {
    width: 60px;
    height: 40px;
}

/* Address bar */
.navrow {
    display: flex;
    align-items: center;
    height: 68px;
    padding: 0 12px 2px 4px;
}

.navrow button {
    width: 46px;
    height: 40px;
}

.navrow .narrow {
    width: 26px;
}

.address {
    flex: 1;
    display: flex;
    align-items: center;
    height: 47px;
    margin: 0 12px 0 4px;
    padding: 0 0 0 10px;
    border: 1px solid #d9d9d9;
    font-family: "Noto Sans", sans-serif;
    white-space: nowrap;
}

.crumb-sep {
    width: 12px;
    height: 12px;
    margin: 0 10px;
    color: #555;
}

.address > .icon {
    margin-right: -2px;
}

.address button {
    color: #555;
}

.address .push {
    margin-left: auto;
}

.search {
    flex: 0 1 536px;
    height: 47px;
    display: flex;
    align-items: center;
    gap: 15px;
    padding: 0 15px;
    border: 1px solid #d9d9d9;
}

.search input {
    flex: 1;
    border: none;
    outline: none;
    padding: 0;
    font-family: "Noto Sans", sans-serif;
    font-size: 16px;
}

.search input::placeholder {
    color: #666;
}

/* Folder tree */
.content {
    flex: 1;
    min-height: 0;
    display: flex;
}

.sidebar {
    display: flex;
    width: 357px;
    padding-right: 2px;
    border-right: 1px solid #f0f0f0;
}

.tree {
    flex: 1;
    padding: 4px 1px 0 3px;
    overflow: hidden;
}

.row {
    display: flex;
    align-items: center;
    gap: 5px;
    height: 28px;
    margin-bottom: 4px;
    padding-left: 13px;
    border-radius: 2px;
    color: #000;
}

.quick {
    padding-left: 38px;
}

.root {
    margin-top: 12px;
    padding-left: 3px;
}

.selected {
    background-color: #d9d9d9;
}

.arrow {
    width: 20px;
    height: 12px;
    color: #888;
}

.root .arrow {
    color: #222;
}

.pin {
    width: 14px;
    height: 14px;
    margin-left: auto;
    margin-right: 4px;
}

.scrollbar {
    width: 20px;
    padding: 113px 7px 153px;
    background-color: #f0f0f0;
}

.thumb {
    height: 100%;
    background-color: #868686;
}

/* File list */
.files {
    flex: 1;
    padding: 8px 20px;
}

.file {
    display: flex;
    flex-direction: column;
    align-items: center;
    gap: 7px;
    width: 131px;
    height: 173px;
    padding: 6px 20px 0;
    background-color: #d9d9d9;
    line-height: 23px;
    text-align: center;
}

.file-icon {
    width: 90px;
    height: 111px;
    margin-left: 9px;
}

/* Status bar */
.status {
    display: flex;
    align-items: center;
    height: 29px;
    padding: 0 5px 0 17px;
    color: #1e395b;
    font-size: 14px;
}

.status span {
    padding-right: 12px;
    margin-right: 13px;
    border-right: 1px solid #eee;
}

.views {
    display: flex;
    margin-left: auto;
}

.views button {
    width: 28px;
    height: 29px;
}

.views .active {
    background-color: #cce8f6;
    border: 1px solid #26a0da;
}

/* Dialogs */
.dialog {
    position: absolute;
    display: flex;
    flex-direction: column;
    border-radius: 9px;
    background-color: #f0f0f0;
    overflow: hidden;
}

.dialog-title {
    display: flex;
    align-items: center;
    height: 37px;
    padding-bottom: 2px;
    font-family: "Noto Sans", sans-serif;
    font-size: 16px;
}

.dialog-title button {
    width: 42px;
    height: 34px;
    margin-left: auto;
}

.btn {
    height: 26px;
    border: 1px solid #ccc;
    border-radius: 4px;
    background-color: #fdfdfd;
    color: #000;
}

.props {
    left: 446px;
    top: 294px;
    width: 504px;
    height: 628px;
    border: 1px solid #a8a8a8;
    box-shadow: 0 16px 40px rgba(0, 0, 0, 0.3);
    font-family: "Liberation Sans", Arial, sans-serif;
    font-size: 13px;
}

.props .dialog-title {
    padding-left: 10px;
    gap: 6px;
    background-color: #fff;
    color: #8f8f8f;
}

.title-photo {
    width: 18px;
    height: 22px;
}

.sheet {
    flex: 1;
    display: flex;
    flex-direction: column;
    margin: 9px 10px 0 8px;
    padding: 244px 18px 0 19px;
    border: 1px solid #e3e3e3;
    background-color: #f9f9f9;
    color: #000;
}

.facts {
    display: grid;
    grid-template-columns: 98px 1fr;
    margin: 0;
    line-height: 32px;
}

.facts dd {
    margin: 0;
}

.sheet hr {
    width: 423px;
    margin: 7px 0 8px;
    border: none;
    border-top: 1px solid #9a9a9a;
}

.attributes {
    display: flex;
    align-items: center;
    padding-top: 4px;
}

.attributes span {
    width: 84px;
    padding-bottom: 3px;
}

.attributes label {
    display: flex;
    align-items: center;
    gap: 3px;
}

.attributes .first {
    width: 144px;
}

.attributes input {
    appearance: none;
    width: 16px;
    height: 16px;
    margin: 0;
    border: 1px solid #555;
    border-radius: 3px;
    background-color: #f5f5f5;
}

.attributes .btn {
    width: 112px;
    margin-left: auto;
}

.dialog-buttons {
    display: flex;
    gap: 10px;
}

.props .dialog-buttons {
    justify-content: flex-end;
    padding: 10px 9px 9px;
}

.props .dialog-buttons .btn {
    width: 98px;
}

.error {
    left: 464px;
    top: 342px;
    width: 494px;
    height: 235px;
    border: 1px solid #6644ff;
    box-shadow: 0 20px 48px rgba(0, 0, 0, 0.42);
    font-family: "Noto Sans", sans-serif;
    font-size: 12px;
    color: #000;
}

.error .dialog-title {
    padding-left: 9px;
    background-color: #6644ff;
    color: #fff;
}

.message {
    flex: 1;
    display: flex;
    gap: 15px;
    padding: 7px 14px;
    line-height: 32px;
}

.message p {
    margin: 0;
}

.warning {
    width: 34px;
    height: 34px;
    margin-top: 9px;
}

.error .dialog-buttons {
    gap: 9px;
    padding: 0 0 9px 64px;
}

.error .btn {
    width: 86px;
}

.error .default {
    border-color: #0067c0;
}

/* Taskbar */
.taskbar {
    display: flex;
    height: 60px;
    padding: 0 24px 0 14px;
    background-color: #1c00e8;
    color: #fff;
}

.apps {
    display: flex;
}

.apps button {
    position: relative;
    width: 55px;
    height: 60px;
}

.apps svg {
    width: 30px;
    height: 30px;
}

.apps .open::after {
    content: "";
    position: absolute;
    bottom: 6px;
    width: 8px;
    height: 4px;
    border-radius: 2px;
    background-color: #9d8cf8;
}

.apps .current {
    background: linear-gradient(#2f16ea, #2f16ea) center / 48px 50px no-repeat;
}

.apps .current::after {
    width: 20px;
    background-color: #c9a5f8;
}

.word {
    font: bold 21px "Liberation Serif", serif;
    fill: #1c4f9c;
}

.sonos {
    font: bold 7px "Liberation Sans", sans-serif;
    text-anchor: middle;
    fill: #222;
}

.letter {
    font: bold 11px "Liberation Sans", sans-serif;
    fill: #fff;
}

.skype {
    font: bold 20px "Liberation Sans", sans-serif;
    text-anchor: middle;
    fill: #fff;
}

.tray {
    display: flex;
    align-items: center;
    gap: 10px;
    margin-left: auto;
    padding-bottom: 2px;
    font-size: 15px;
    line-height: 20px;
}

.lang {
    margin: 0 12px 0 7px;
}

.clock {
    margin-left: 8px;
    text-align: right;
}
```
